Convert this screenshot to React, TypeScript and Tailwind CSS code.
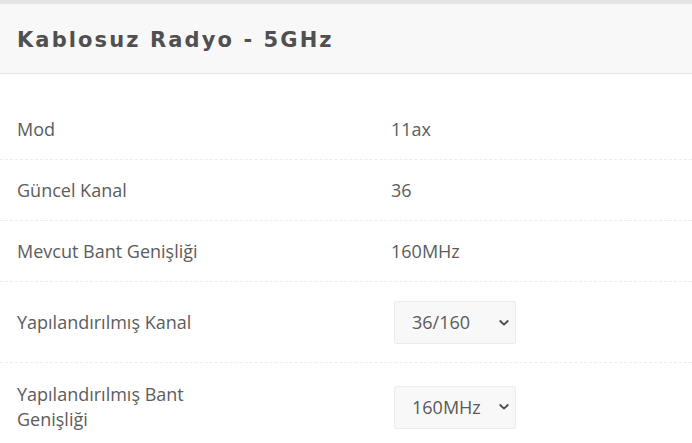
import React from 'react';

interface RadioRow {
  label: string;
  value?: string;
  options?: string[];
}

const rows: RadioRow[] = [
  { label: 'Mod', value: '11ax' },
  { label: 'Güncel Kanal', value: '36' },
  { label: 'Mevcut Bant Genişliği', value: '160MHz' },
  { label: 'Yapılandırılmış Kanal', options: ['36/160', '52/160', 'Otomatik'] },
  { label: 'Yapılandırılmış Bant Genişliği', options: ['160MHz', '80MHz', '40MHz', '20MHz'] },
];

// Küçük açılır ok
const Chevron = () => (
  <svg className="pointer-events-none absolute right-[7px] top-1/2 h-[10px] w-[10px] -translate-y-1/2" viewBox="0 0 10 10" fill="none">
    <path d="M1.2 3l3.8 3.6L8.8 3" stroke="#4a4a4a" strokeWidth="1.8" strokeLinecap="round" strokeLinejoin="round" />
  </svg>
);

const SelectBox: React.FC<{ options: string[] }> = ({ options }) => (
  <div className="relative ml-[3px] w-[122px]">
    <select
      defaultValue={options[0]}
      className="h-[43px] w-full appearance-none rounded-[2px] border border-[#ececec] bg-[#f8f8f8] pl-[17px] font-['Open_Sans',sans-serif] text-[18px] text-[#5a5a5a] outline-none"
    >
      {options.map((o) => (
        <option key={o}>{o}</option>
      ))}
    </select>
    <Chevron />
  </div>
);

export default function App() {
  return (
    <div className="min-h-screen bg-white font-['Open_Sans',sans-serif]">
      <div className="h-[4px] bg-[#e4e4e4]" />
      <div className="flex h-[70px] items-center border-b border-[#e6e6e6] bg-[#f8f8f8] px-[17px] pt-[4px]">
        <h2 className="font-['DejaVu_Sans',sans-serif] text-[21px] font-bold tracking-[2.1px] text-[#505050]">
          Kablosuz Radyo - 5GHz
        </h2>
      </div>

      <div className="pt-[25px]">
        {rows.map((row, i) => (
          <div
            key={row.label}
            className={`flex items-center px-[17px] text-[18px] leading-[25px] text-[#5c5c5c] ${
              row.options ? 'pt-[19px] pb-[18px]' : 'pt-[18px] pb-[17px]'
            } ${i < rows.length - 1 ? 'border-b border-dashed border-[#ececec]' : ''}`}
          >
            <div className="w-[374px] pr-[150px]">{row.label}</div>
            <div>{row.options ? <SelectBox options={row.options} /> : row.value}</div>
          </div>
        ))}
      </div>
    </div>
  );
}
